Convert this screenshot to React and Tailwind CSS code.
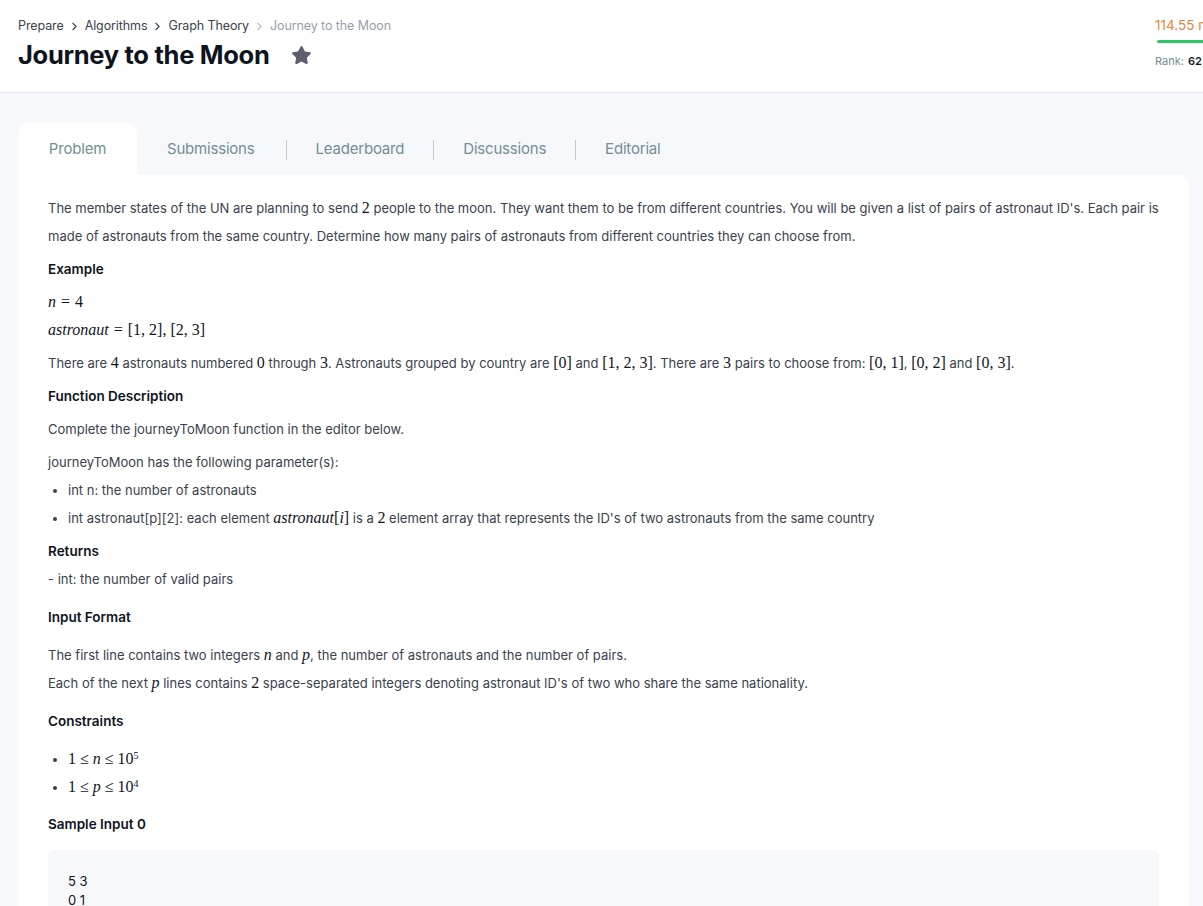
import { Star, ChevronRight } from 'lucide-react'

const tabs = ['Submissions', 'Leaderboard', 'Discussions', 'Editorial']

function M({ children, i }) {
  return (
    <span className={`font-['Liberation_Serif',serif] text-[16px] text-[#0e141e] ${i ? 'italic' : ''}`}>
      {children}
    </span>
  )
}

function Eq() {
  return <span className="font-['Liberation_Serif',serif] text-[16px] text-[#0e141e] mx-[5px]">=</span>
}

function H({ children, className = '' }) {
  return <div className={`font-semibold text-[13.5px] text-[#0e141e] leading-[28px] ${className}`}>{children}</div>
}

function P({ children, className = '' }) {
  return <p className={`leading-[28px] ${className}`}>{children}</p>
}

export default function App() {
  return (
    <div className="min-h-screen bg-[#f7f8fc] font-['Inter','Liberation_Sans',sans-serif] overflow-hidden">
      {/* Header */}
      <header className="h-[93px] bg-white border-b border-[#e7eaf0] flex justify-between pl-[18px]">
        <div className="pt-[17px]">
          <nav className="flex items-center text-[12.5px] text-[#39424e] h-[18px] tracking-[-0.1px]">
            <span>Prepare</span>
            <ChevronRight className="w-[13px] h-[13px] mx-[4px]" strokeWidth={2} />
            <span>Algorithms</span>
            <ChevronRight className="w-[13px] h-[13px] mx-[4px]" strokeWidth={2} />
            <span>Graph Theory</span>
            <ChevronRight className="w-[13px] h-[13px] mx-[4px] text-[#b7bcc4]" strokeWidth={2} />
            <span className="text-[#979faf]">Journey to the Moon</span>
          </nav>
          <div className="flex items-center mt-[1px]">
            <h1 className="text-[25.5px] font-bold text-[#0e141e] tracking-[-0.3px]">Journey to the Moon</h1>
            <Star className="w-[21px] h-[21px] ml-[22px] fill-[#5d5f6e] text-[#5d5f6e]" strokeWidth={1.5} />
          </div>
        </div>
        <div className="w-[48px] pt-[16px] overflow-hidden whitespace-nowrap">
          <div className="text-[13.5px] text-[#e8833a] leading-[18px]">114.55 more points to get your next star!</div>
          <div className="h-[3px] bg-[#2ec866] rounded-l-full mt-[6px] ml-[2px]" />
          <div className="text-[11px] text-[#738f93] mt-[10px]">
            Rank: <span className="font-semibold text-[#0e141e] ml-[1px]">62</span>
          </div>
        </div>
      </header>

      {/* Body */}
      <div className="pl-[18px] pr-[14px] pt-[30px]">
        <div className="flex items-end h-[52px]">
          <div className="w-[119px] h-[52px] bg-white rounded-t-[10px] flex items-center justify-center text-[15px] text-[#738f93] tracking-[-0.2px] pt-[1px]">
            Problem
          </div>
          {tabs.map((t, i) => (
            <div key={t} className="flex items-center h-[52px] pt-[1px]">
              {i > 0 && <div className="w-px h-[20px] bg-[#c2c7d0]" />}
              <span className={`text-[15px] text-[#738f93] tracking-[-0.2px] ${i === 0 ? 'pl-[30px] pr-[31px]' : 'px-[29px]'}`}>{t}</span>
            </div>
          ))}
        </div>

        <div className="bg-white rounded-tr-[10px] px-[30px] pt-[19px] pb-[40px] text-[13px] text-[#39424e]">
          <P>
            The member states of the UN are planning to send <M>2</M> people to the moon. They want them to be from different countries. You will be given a list of pairs of astronaut ID's. Each pair is made of astronauts from the same country. Determine how many pairs of astronauts from different countries they can choose from.
          </P>
          <H className="mt-[5px]">Example</H>
          <P className="mt-[5px]"><M i>n</M><Eq /><M>4</M></P>
          <P><M i>astronaut</M><Eq /><M>[1, 2], [2, 3]</M></P>
          <P className="mt-[5px]">
            There are <M>4</M> astronauts numbered <M>0</M> through <M>3</M>. Astronauts grouped by country are <M>[0]</M> and <M>[1, 2, 3]</M>. There are <M>3</M> pairs to choose from: <M>[0, 1]</M>, <M>[0, 2]</M> and <M>[0, 3]</M>.
          </P>
          <H className="mt-[5px]">Function Description</H>
          <P className="mt-[5px]">Complete the journeyToMoon function in the editor below.</P>
          <P className="mt-[5px]">journeyToMoon has the following parameter(s):</P>
          <ul className="list-disc pl-[20px]">
            <li className="leading-[28px]">int n: the number of astronauts</li>
            <li className="leading-[28px]">
              int astronaut[p][2]: each element <M i>astronaut</M><M>[</M><M i>i</M><M>]</M> is a <M>2</M> element array that represents the ID's of two astronauts from the same country
            </li>
          </ul>
          <H className="mt-[5px]">Returns</H>
          <P>- int: the number of valid pairs</P>
          <H className="mt-[10px]">Input Format</H>
          <P className="mt-[10px]">
            The first line contains two integers <M i>n</M> and <M i>p</M>, the number of astronauts and the number of pairs.
          </P>
          <P>
            Each of the next <M i>p</M> lines contains <M>2</M> space-separated integers denoting astronaut ID's of two who share the same nationality.
          </P>
          <H className="mt-[10px]">Constraints</H>
          <ul className="list-disc pl-[20px] mt-[10px]">
            <li className="leading-[28px]"><M>1 ≤ </M><M i>n</M><M> ≤ 10<sup className="text-[10px]">5</sup></M></li>
            <li className="leading-[28px]"><M>1 ≤ </M><M i>p</M><M> ≤ 10<sup className="text-[10px]">4</sup></M></li>
          </ul>
          <H className="mt-[9px]">Sample Input 0</H>
          <pre className="mt-[12px] bg-[#f7f8fc] rounded-[6px] px-[20px] pt-[22px] pb-[20px] text-[13px] text-[#0e141e] font-['Inter','Liberation_Sans',sans-serif] leading-[19px]">
{`5 3
0 1
2 3
0 4`}
          </pre>
        </div>
      </div>
    </div>
  )
}
